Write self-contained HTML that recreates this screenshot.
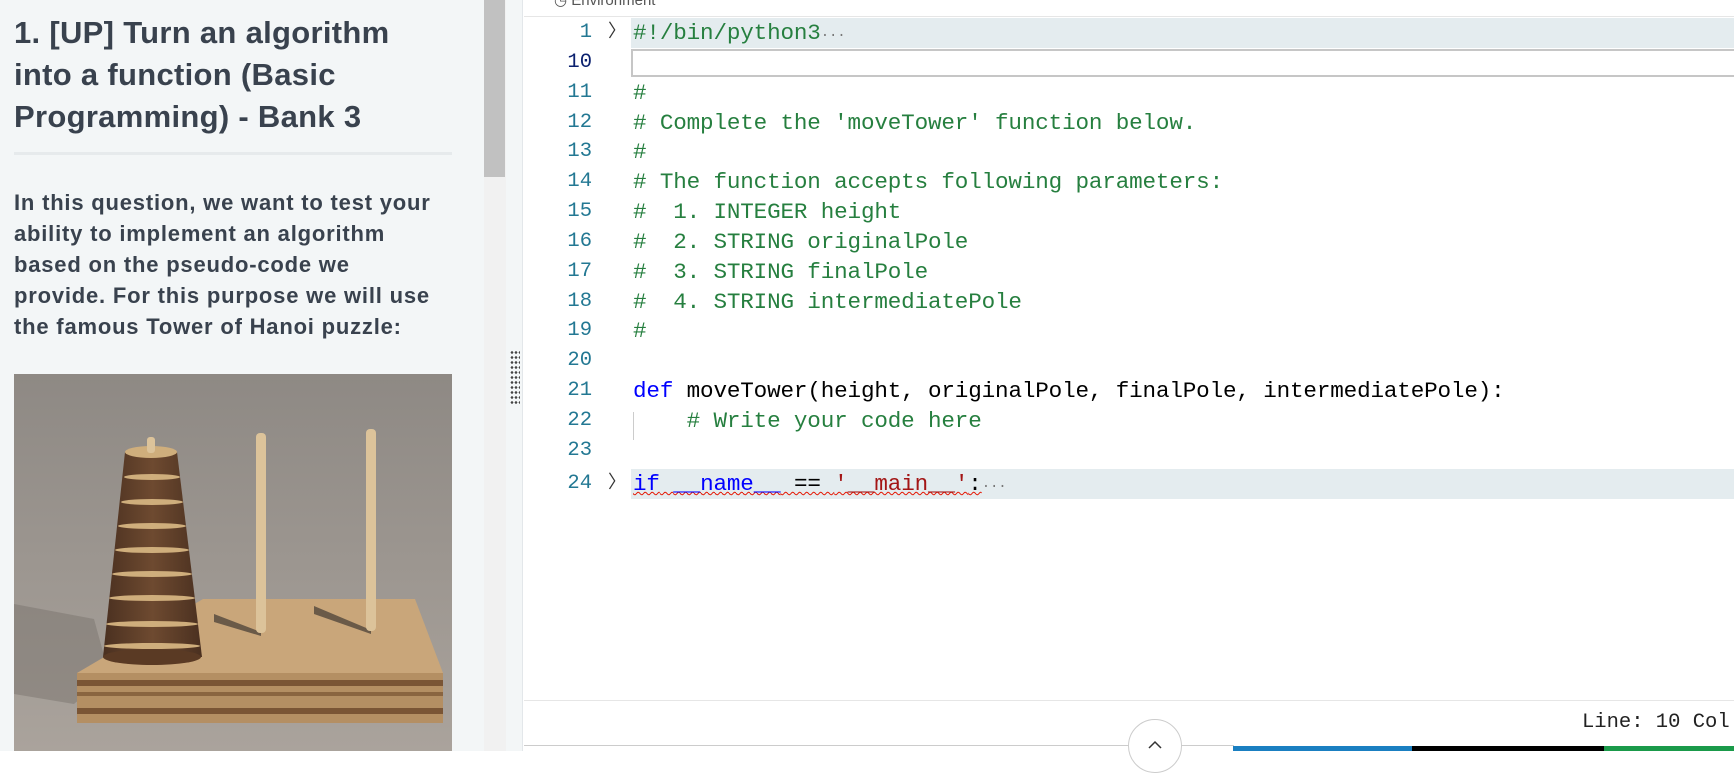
<!DOCTYPE html>
<html><head><meta charset="utf-8"><style>
*{margin:0;padding:0;box-sizing:border-box}
body{width:1734px;height:751px;overflow:hidden;background:#fff;position:relative;font-family:"Liberation Sans",sans-serif}
#left{position:absolute;left:0;top:0;width:484px;height:751px;background:#f3f6f7}
h1{position:absolute;left:14px;top:12px;font-size:31px;line-height:42px;font-weight:bold;color:#39424e;letter-spacing:0.3px;white-space:nowrap}
#hr{position:absolute;left:14px;top:152px;width:438px;height:3px;background:#e6eaec}
p{position:absolute;left:14px;top:187px;font-size:22px;line-height:31px;font-weight:bold;color:#39424e;letter-spacing:0.8px;white-space:nowrap}
#img{position:absolute;left:14px;top:374px}
#sb{position:absolute;left:484px;top:0;width:22px;height:751px;background:#f1f1f1}
#thumb{position:absolute;left:484px;top:0;width:21px;height:177px;background:#c1c1c1}
#gut{position:absolute;left:506px;top:0;width:17px;height:751px;background:#f3f6f7;border-right:1px solid #e3e7ea}
#grip{position:absolute;left:510px;top:350px;width:10px;height:56px;background-image:radial-gradient(circle,#444 1.2px,transparent 1.4px);background-size:4px 5px}
#env{position:absolute;left:524px;top:0;width:1210px;height:17px;border-bottom:1px solid #e6e6e6;font-size:15px;color:#555;line-height:2px;padding-left:30px}
.ln{position:absolute;left:524px;width:68px;text-align:right;font-family:"Liberation Mono",monospace;font-size:20.5px;color:#237893;height:30px;line-height:30px}
.code{position:absolute;left:633px;font-family:"Liberation Mono",monospace;font-size:22.6px;white-space:pre;height:30px;line-height:30px;color:#000;letter-spacing:-0.15px}
.c{color:#267f3f}.k{color:#0000ff}.s{color:#a31515}
.arr{position:absolute;left:608px;font-family:"DejaVu Sans",sans-serif;font-size:18px;color:#333;line-height:30px}
</style></head><body>
<div id="left">
<h1>1. [UP] Turn an algorithm<br>into a function (Basic<br>Programming) - Bank 3</h1>
<div id="hr"></div>
<p>In this question, we want to test your<br>ability to implement an algorithm<br>based on the pseudo-code we<br>provide. For this purpose we will use<br>the famous Tower of Hanoi puzzle:</p>
<svg id="img" width="438" height="377" viewBox="0 0 438 377">
<defs><linearGradient id="bg" x1="0" y1="0" x2="0" y2="1"><stop offset="0" stop-color="#8e8984"/><stop offset="1" stop-color="#aaa39c"/></linearGradient>
<linearGradient id="tw" x1="0" y1="0" x2="1" y2="0"><stop offset="0" stop-color="#4a3020"/><stop offset="0.5" stop-color="#6e4a30"/><stop offset="1" stop-color="#4a3020"/></linearGradient></defs>
<rect width="438" height="377" fill="url(#bg)"/>
<polygon points="0,230 80,245 95,300 60,330 0,320" fill="#7a746e" opacity="0.5"/>
<polygon points="189,225 401,225 429,299 63,299" fill="#c9a67a"/>
<polygon points="63,299 429,299 429,349 63,349" fill="#b48f63"/>
<rect x="63" y="306" width="366" height="6" fill="#7a5535"/>
<rect x="63" y="318" width="366" height="4" fill="#8a6540"/>
<rect x="63" y="334" width="366" height="6" fill="#7a5535"/>
<polygon points="200,240 247,258 247,262 200,248" fill="#6a5a48"/>
<polygon points="300,232 357,256 357,260 300,240" fill="#6a5a48"/>
<rect x="242" y="59" width="10" height="200" rx="4" fill="#dcc39a"/>
<rect x="352" y="55" width="10" height="202" rx="4" fill="#dcc39a"/>
<polygon points="111,78 163,78 188,283 89,283" fill="url(#tw)"/>
<ellipse cx="138" cy="283" rx="49" ry="8" fill="#5a3a24"/>
<g fill="#cfae7c">
<ellipse cx="137" cy="78" rx="26" ry="6"/>
<ellipse cx="138" cy="103" rx="28" ry="3"/>
<ellipse cx="138" cy="128" rx="31" ry="3"/>
<ellipse cx="138" cy="152" rx="34" ry="3"/>
<ellipse cx="138" cy="176" rx="37" ry="3"/>
<ellipse cx="138" cy="200" rx="40" ry="3"/>
<ellipse cx="138" cy="224" rx="43" ry="3"/>
<ellipse cx="138" cy="250" rx="46" ry="3"/>
<ellipse cx="138" cy="272" rx="48" ry="3"/>
</g>
<rect x="133" y="63" width="8" height="16" rx="3" fill="#dcc39a"/>
</svg>
</div>
<div id="sb"></div><div id="thumb"></div>
<div id="gut"></div><div id="grip"></div>
<div id="env">◷ Environment</div>

<div style="position:absolute;left:631px;top:18px;width:1103px;height:30px;background:#e4ecef"></div>
<div style="position:absolute;left:631px;top:49px;width:1103px;height:28px;border:2px solid #c6c6c6;border-right:none"></div>
<div style="position:absolute;left:631px;top:469px;width:1103px;height:30px;background:#e4ecef"></div>
<div style="position:absolute;left:633px;top:412px;width:1px;height:28px;background:#ccc"></div>

<div class="ln" style="top:18px">1</div><div class="arr" style="top:17px">〉</div>
<div class="code c" style="top:18px">#!/bin/python3<span style="color:#777;font-size:14px">···</span></div>
<div class="ln" style="top:48px;color:#0b216f">10</div>
<div class="ln" style="top:78px">11</div><div class="code c" style="top:78px">#</div>
<div class="ln" style="top:108px">12</div><div class="code c" style="top:108px"># Complete the 'moveTower' function below.</div>
<div class="ln" style="top:137px">13</div><div class="code c" style="top:137px">#</div>
<div class="ln" style="top:167px">14</div><div class="code c" style="top:167px"># The function accepts following parameters:</div>
<div class="ln" style="top:197px">15</div><div class="code c" style="top:197px">#  1. INTEGER height</div>
<div class="ln" style="top:227px">16</div><div class="code c" style="top:227px">#  2. STRING originalPole</div>
<div class="ln" style="top:257px">17</div><div class="code c" style="top:257px">#  3. STRING finalPole</div>
<div class="ln" style="top:287px">18</div><div class="code c" style="top:287px">#  4. STRING intermediatePole</div>
<div class="ln" style="top:316px">19</div><div class="code c" style="top:316px">#</div>
<div class="ln" style="top:346px">20</div>
<div class="ln" style="top:376px">21</div><div class="code" style="top:376px"><span class="k">def</span> moveTower(height, originalPole, finalPole, intermediatePole):</div>
<div class="ln" style="top:406px">22</div><div class="code c" style="top:406px">    # Write your code here</div>
<div class="ln" style="top:436px">23</div>
<div class="ln" style="top:469px">24</div><div class="arr" style="top:468px">〉</div>
<div class="code" style="top:469px"><span style="text-decoration:underline wavy #e51400;text-decoration-thickness:1px"><span class="k">if</span> <span class="k">__name__</span> == <span class="s">'__main__'</span>:</span><span style="color:#777;font-size:14px">···</span></div>

<div style="position:absolute;left:524px;top:700px;width:1210px;height:1px;background:#e6e6e6"></div>
<div style="position:absolute;left:1582px;top:709px;font-family:'Liberation Mono',monospace;font-size:20.5px;color:#222;line-height:28px">Line: 10 Col</div>
<div style="position:absolute;left:524px;top:745px;width:710px;height:1px;background:#ccc"></div>
<div style="position:absolute;left:1128px;top:719px;width:54px;height:54px;border-radius:50%;border:1px solid #ccc;background:#fff"></div>
<svg style="position:absolute;left:1147px;top:740px" width="16" height="10"><path d="M2 8 L8 2 L14 8" fill="none" stroke="#333" stroke-width="1.5"/></svg>
<div style="position:absolute;left:1233px;top:746px;width:179px;height:5px;background:#1a7fc1"></div>
<div style="position:absolute;left:1412px;top:746px;width:192px;height:5px;background:#000"></div>
<div style="position:absolute;left:1604px;top:746px;width:130px;height:5px;background:#1a9a4a"></div>
</body></html>
